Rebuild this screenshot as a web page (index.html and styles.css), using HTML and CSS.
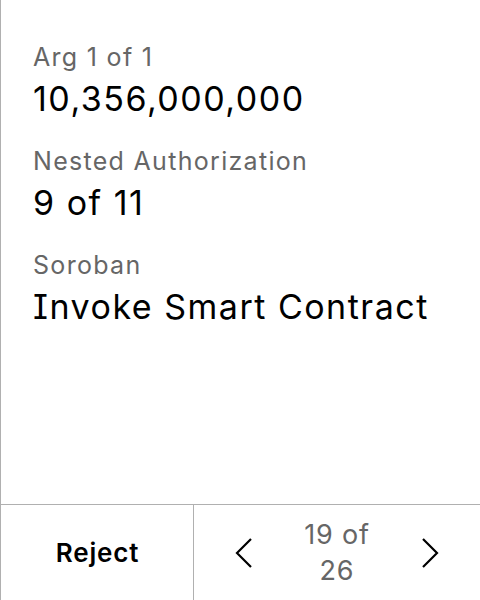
FILE: index.html
```html
<!DOCTYPE html>
<html lang="en">
<head>
<meta charset="utf-8">
<title>Review</title>
<link rel="stylesheet" href="styles.css">
</head>
<body>
<div class="screen">
  <main class="content">
    <section class="field">
      <div class="label">Arg 1 of 1</div>
      <div class="value">10,356,000,000</div>
    </section>
    <section class="field">
      <div class="label">Nested Authorization</div>
      <div class="value">9 of 11</div>
    </section>
    <section class="field">
      <div class="label">Soroban</div>
      <div class="value">Invoke Smart Contract</div>
    </section>
  </main>
  <footer class="footer">
    <div class="reject">Reject</div>
    <div class="nav">
      <svg class="chev" width="18" height="32" viewBox="0 0 18 32"><path d="M16 2 L2 16 L16 30" fill="none" stroke="#000" stroke-width="2.2"/></svg>
      <div class="counter">19 of 26</div>
      <svg class="chev" width="18" height="32" viewBox="0 0 18 32"><path d="M2 2 L16 16 L2 30" fill="none" stroke="#000" stroke-width="2.2"/></svg>
    </div>
  </footer>
</div>
</body>
</html>
```
FILE: styles.css
```css
html, body {
  margin: 0;
  padding: 0;
  background: #fff;
}
body {
  font-family: Inter, "Noto Sans", sans-serif;
  font-feature-settings: "cv08";
  color: #000;
}
.screen {
  height: 600px;
  display: flex;
  flex-direction: column;
  border-left: 1px solid #b0b0b0;
  box-sizing: border-box;
}
.content {
  flex: 1;
  padding: 41px 0 0 32px;
  display: flex;
  flex-direction: column;
  gap: 26px;
}
.label {
  font-size: 25px;
  line-height: 32px;
  letter-spacing: 1.3px;
  color: #666;
}
.value {
  font-size: 34px;
  line-height: 40px;
  letter-spacing: 1.5px;
  margin-top: 6px;
  color: #000;
  white-space: nowrap;
}
.footer {
  height: 95px;
  border-top: 1px solid #b0b0b0;
  display: flex;
}
.reject {
  width: 191px;
  border-right: 1px solid #b0b0b0;
  display: flex;
  align-items: center;
  justify-content: center;
  font-size: 26px;
  font-weight: 600;
  letter-spacing: 0.8px;
  padding-left: 1px;
}
.nav {
  flex: 1;
  display: flex;
  align-items: center;
  justify-content: space-between;
  padding: 0 41px 0 41px;
}
.chev {
  display: block;
}
.counter {
  width: 80px;
  text-align: center;
  font-size: 27px;
  line-height: 36px;
  letter-spacing: 0.8px;
  color: #666;
}
```
